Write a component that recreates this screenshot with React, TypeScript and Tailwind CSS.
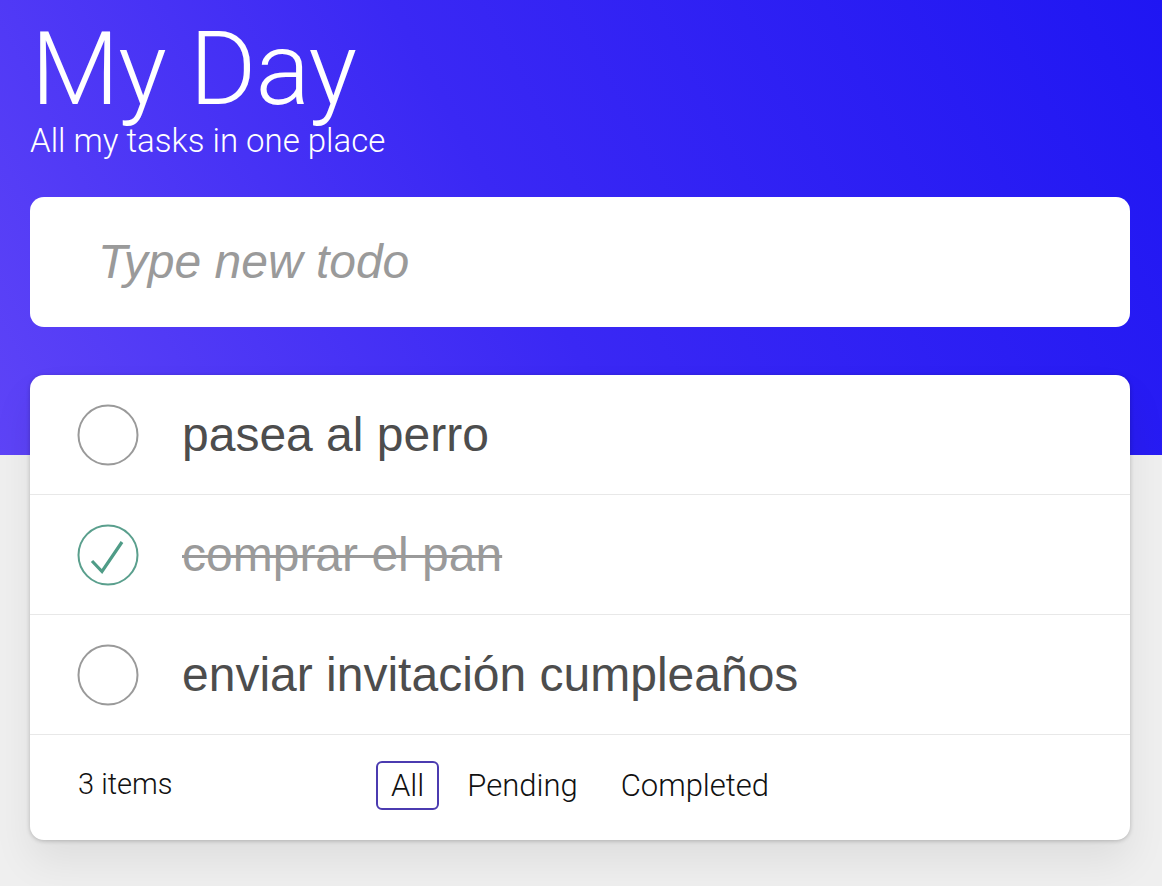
import React from 'react';

type Todo = { id: number; title: string; done: boolean };

const TODOS: Todo[] = [
  { id: 1, title: 'pasea al perro', done: false },
  { id: 2, title: 'comprar el pan', done: true },
  { id: 3, title: 'enviar invitación cumpleaños', done: false },
];

const FILTERS = ['All', 'Pending', 'Completed'];

function Check({ done }: { done: boolean }) {
  return (
    <svg width="62" height="62" viewBox="0 0 62 62" fill="none" className="shrink-0">
      <circle cx="31" cy="31" r="29.5" stroke={done ? '#5a9f8d' : '#9a9a9a'} strokeWidth="2" />
      {done && (
        <path d="M15 37 L25 47.5 L45 18" stroke="#4f9c87" strokeWidth="3.2" strokeLinecap="butt" strokeLinejoin="miter" />
      )}
    </svg>
  );
}

export default function App() {
  const [filter, setFilter] = React.useState('All');

  return (
    <div
      className="min-h-screen bg-[#efefef] bg-[linear-gradient(62deg,#5e44f7_0%,#3a28f4_45%,#1f16f3_100%)] bg-[length:100%_455px] bg-no-repeat pl-[30px] pr-[32px] pt-[18px] pb-[46px]"
      style={{ fontFamily: '"Liberation Sans", Arial, sans-serif' }}
    >
      {/* Title */}
      <h1 className="text-white text-[102px] leading-[1] font-light tracking-[-1px] pl-[1px]" style={{ fontFamily: 'Roboto, "Liberation Sans", sans-serif' }}>
        My Day
      </h1>
      <p className="text-white text-[33px] leading-[1] font-light mt-[4px]" style={{ fontFamily: 'Roboto, "Liberation Sans", sans-serif' }}>
        All my tasks in one place
      </p>

      {/* New todo */}
      <div className="mt-[40px] h-[130px] bg-white rounded-[14px] flex items-center pl-[68px]">
        <input
          placeholder="Type new todo"
          className="w-full outline-none bg-transparent text-[48px] italic text-[#4d4d4d] placeholder:text-[#9a9a9a]"
        />
      </div>

      {/* List */}
      <div className="mt-[48px] bg-white rounded-[14px] shadow-[0_1px_4px_rgba(0,0,0,0.22),0_22px_40px_rgba(0,0,0,0.07)] overflow-hidden">
        <ul>
          {TODOS.map(t => (
            <li key={t.id} className="h-[120px] flex items-center border-b border-[#e8e8e8] pl-[47px] gap-[43px]">
              <Check done={t.done} />
              <span
                className={
                  t.done
                    ? 'text-[48px] text-[#9a9a9a] line-through decoration-[3px]'
                    : 'text-[48px] text-[#4d4d4d]'
                }
              >
                {t.title}
              </span>
            </li>
          ))}
        </ul>
        <div
          className="h-[105px] pb-[5px] grid grid-cols-[1fr_auto_1fr] items-center px-[48px] text-[29px] text-[#111] font-light"
          style={{ fontFamily: 'Roboto, "Liberation Sans", sans-serif' }}
        >
          <span>3 items</span>
          <div className="flex gap-[13px] text-[31px]">
            {FILTERS.map(f => (
              <button
                key={f}
                onClick={() => setFilter(f)}
                className={
                  f === filter
                    ? 'h-[49px] px-[13px] rounded-[6px] border-2 border-[#4b3bb0] leading-none'
                    : 'h-[49px] px-[13px] rounded-[6px] border-2 border-transparent leading-none'
                }
              >
                {f}
              </button>
            ))}
          </div>
          <span />
        </div>
      </div>
    </div>
  );
}
